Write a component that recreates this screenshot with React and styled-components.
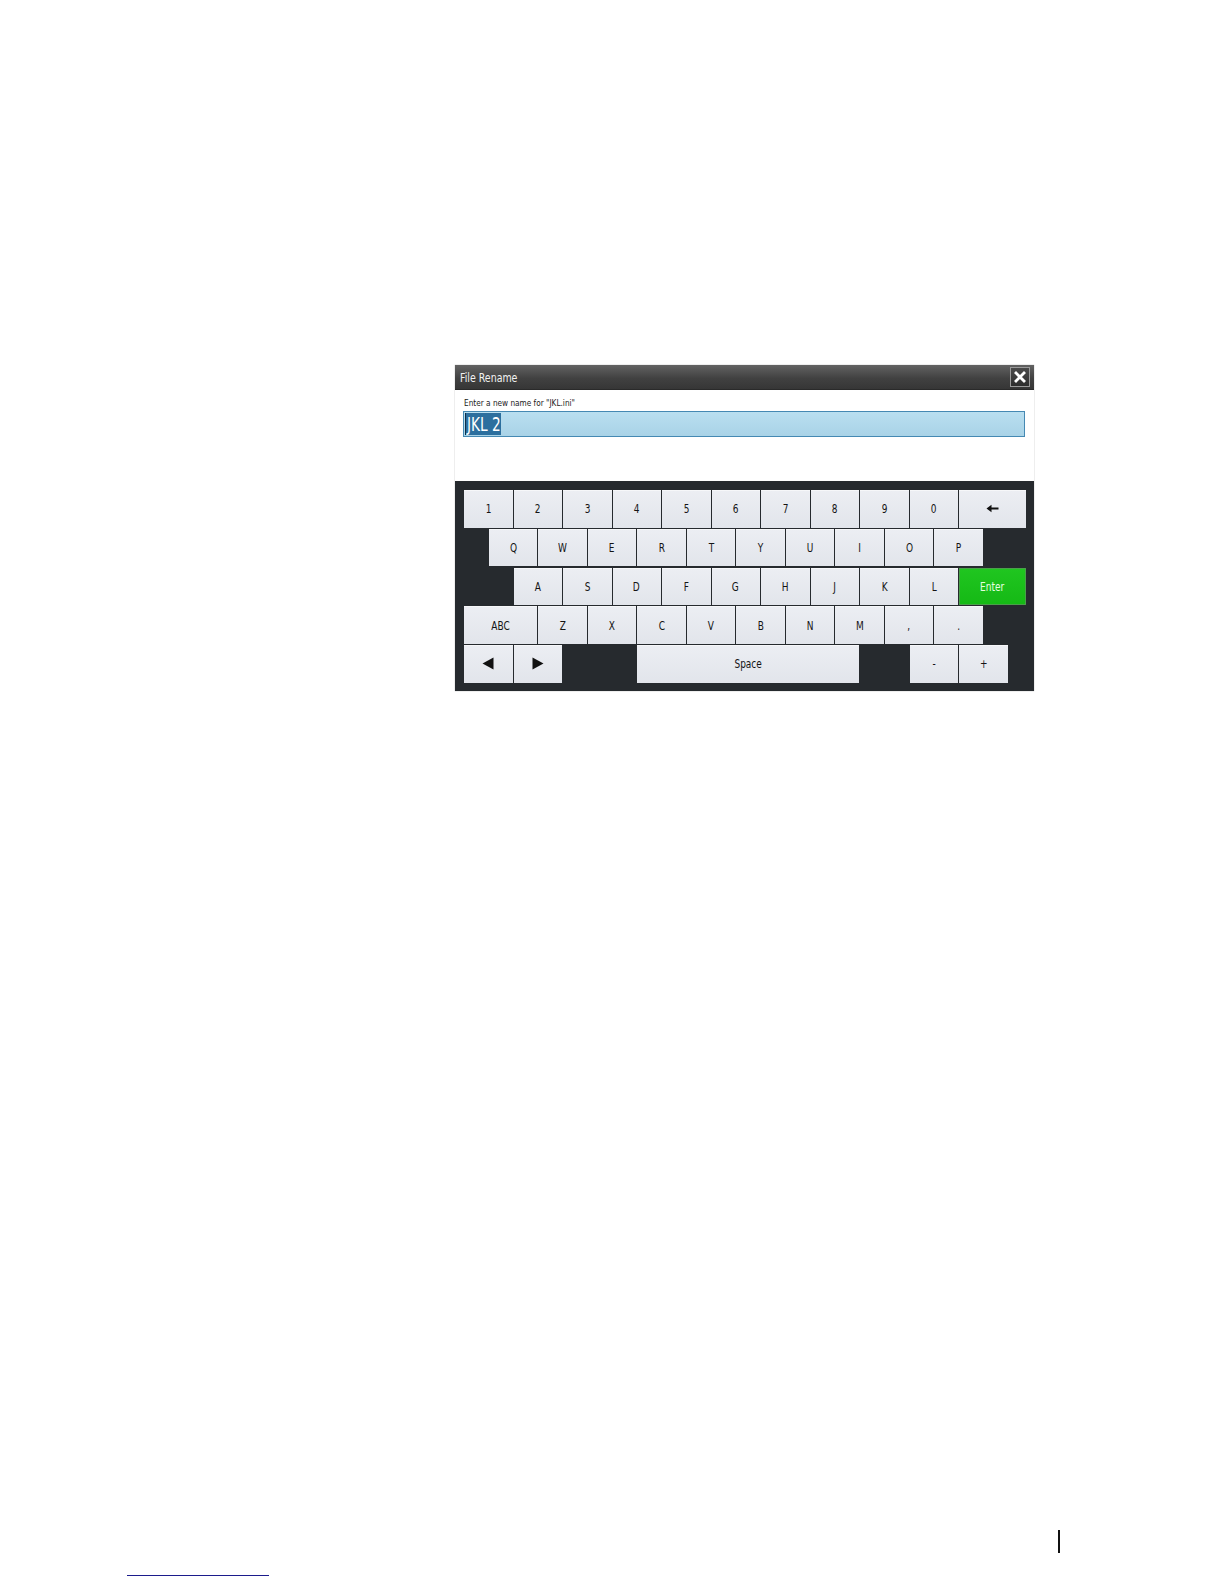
import React from "react";
import styled, { createGlobalStyle } from "styled-components";

const Global = createGlobalStyle`
  html, body { margin: 0; padding: 0; background: #ffffff; }
  body { font-family: "Liberation Sans Narrow", "DejaVu Sans Condensed", "Liberation Sans", sans-serif; }
`;

const Page = styled.div`
  width: 1224px;
  height: 1584px;
  display: flex;
  flex-direction: column;
  background: #fff;
  overflow: hidden;
`;

const Dialog = styled.div`
  margin: 365px 0 0 455px;
  width: 579px;
  display: flex;
  flex-direction: column;
  box-shadow: 0 0 1px rgba(0,0,0,0.4);
`;

const TitleBar = styled.div`
  height: 24px;
  display: flex;
  align-items: center;
  justify-content: space-between;
  padding: 0 4px 0 5px;
  background: linear-gradient(#626262, #414141 55%, #363636);
  border-bottom: 1px solid #2a2a2a;
`;

const Narrow = styled.span`
  display: inline-block;
  transform: scaleX(${(p) => p.$sx || 0.86});
  transform-origin: ${(p) => (p.$left ? "left center" : "center")};
  white-space: nowrap;
  margin-right: ${(p) => p.$mr || 0}px;
`;

const Title = styled.span`
  color: #f2f2f2;
  font-size: 12.5px;
`;

const CloseButton = styled.div`
  width: 20px;
  height: 20px;
  display: flex;
  align-items: center;
  justify-content: center;
  border: 1px solid #9a9a9a;
  background: linear-gradient(#4a4a4a, #2e2e2e);
  box-sizing: border-box;
`;

const Body = styled.div`
  height: 91px;
  background: #fff;
  padding: 7px 9px 0 8px;
  box-sizing: border-box;
  display: flex;
  flex-direction: column;
  gap: 3px;
`;

const Label = styled.div`
  font-size: 9.5px;
  color: #1a1a1a;
  padding-left: 1px;
  line-height: 11px;
`;

const Input = styled.div`
  height: 26px;
  box-sizing: border-box;
  border: 1px solid #4589b3;
  background: linear-gradient(#b9dff0, #a9d3e7);
  display: flex;
  align-items: center;
  padding-left: 1px;
`;

const Selected = styled.span`
  background: #2c6f9e;
  color: #ffffff;
  font-size: 19px;
  line-height: 22px;
  padding: 0 1px 0 1px;
  border-left: 1px solid #0c2f4a;
`;

const Keyboard = styled.div`
  background: #262a2e;
  padding: 9px 8px 8px 9px;
  display: grid;
  grid-template-columns: repeat(22, 23.75px) 17px;
  grid-auto-rows: 37.5px;
  column-gap: 1px;
  row-gap: 1.3px;
`;

const Key = styled.div`
  grid-row: ${(p) => p.$row};
  grid-column: ${(p) => p.$col} / span ${(p) => p.$span || 2};
  display: flex;
  align-items: center;
  justify-content: center;
  background: ${(p) => (p.$green ? "linear-gradient(#20c620, #15b915)" : "linear-gradient(#eceef3, #e2e5eb)")};
  color: ${(p) => (p.$green ? "#e6ffe0" : "#141414")};
  font-size: 12.5px;
  box-shadow: ${(p) => (p.$green ? "inset 0 0 0 1px #4aa04a" : "inset 0 1px 0 #f6f7f9")};
`;

const Spacer = styled.div`
  flex: 1;
`;

const PageMark = styled.div`
  margin: 0 0 22px 1058px;
  width: 2px;
  height: 23px;
  background: #111;
`;

const LinkLine = styled.div`
  margin: 0 0 8px 127px;
  width: 142px;
  height: 1.5px;
  background: #1c1c8c;
`;

const XIcon = () => (
  <svg width="12" height="12" viewBox="0 0 12 12">
    <path d="M2 2 L10 10 M10 2 L2 10" stroke="#fff" strokeWidth="2.8" strokeLinecap="square" />
  </svg>
);

const BackIcon = () => (
  <svg width="13" height="9" viewBox="0 0 13 9">
    <path d="M0.5 4.5 L5.5 0.8 L5.5 3.4 L12.5 3.4 L12.5 5.6 L5.5 5.6 L5.5 8.2 Z" fill="#111" />
  </svg>
);

const TriLeft = () => (
  <svg width="12" height="13" viewBox="0 0 12 13">
    <path d="M0.5 6.5 L11.5 0.5 L11.5 12.5 Z" fill="#111" />
  </svg>
);

const TriRight = () => (
  <svg width="12" height="13" viewBox="0 0 12 13">
    <path d="M11.5 6.5 L0.5 0.5 L0.5 12.5 Z" fill="#111" />
  </svg>
);

const row1 = ["1", "2", "3", "4", "5", "6", "7", "8", "9", "0"];
const row2 = ["Q", "W", "E", "R", "T", "Y", "U", "I", "O", "P"];
const row3 = ["A", "S", "D", "F", "G", "H", "J", "K", "L"];
const row4 = ["Z", "X", "C", "V", "B", "N", "M", ",", "."];

const T = ({ children }) => <Narrow $sx={0.8}>{children}</Narrow>;

export default function App() {
  return (
    <>
      <Global />
      <Page>
        <Dialog>
          <TitleBar>
            <Title><Narrow $left $sx={0.84}>File Rename</Narrow></Title>
            <CloseButton>
              <XIcon />
            </CloseButton>
          </TitleBar>
          <Body>
            <Label><Narrow $left $sx={0.86}>Enter a new name for "JKL.ini"</Narrow></Label>
            <Input>
              <Selected><Narrow $left $sx={0.8} $mr={-9}>JKL 2</Narrow></Selected>
            </Input>
          </Body>
          <Keyboard>
            {row1.map((k, i) => (
              <Key key={k} $row={1} $col={1 + i * 2}><T>{k}</T></Key>
            ))}
            <Key $row={1} $col={21} $span={3}><BackIcon /></Key>
            {row2.map((k, i) => (
              <Key key={k} $row={2} $col={2 + i * 2}><T>{k}</T></Key>
            ))}
            {row3.map((k, i) => (
              <Key key={k} $row={3} $col={3 + i * 2}><T>{k}</T></Key>
            ))}
            <Key $row={3} $col={21} $span={3} $green><T>Enter</T></Key>
            <Key $row={4} $col={1} $span={3}><T>ABC</T></Key>
            {row4.map((k, i) => (
              <Key key={k} $row={4} $col={4 + i * 2}><T>{k}</T></Key>
            ))}
            <Key $row={5} $col={1}><TriLeft /></Key>
            <Key $row={5} $col={3}><TriRight /></Key>
            <Key $row={5} $col={8} $span={9}><T>Space</T></Key>
            <Key $row={5} $col={19}><T>-</T></Key>
            <Key $row={5} $col={21}><T>+</T></Key>
          </Keyboard>
        </Dialog>
        <Spacer />
        <PageMark />
        <LinkLine />
      </Page>
    </>
  );
}
